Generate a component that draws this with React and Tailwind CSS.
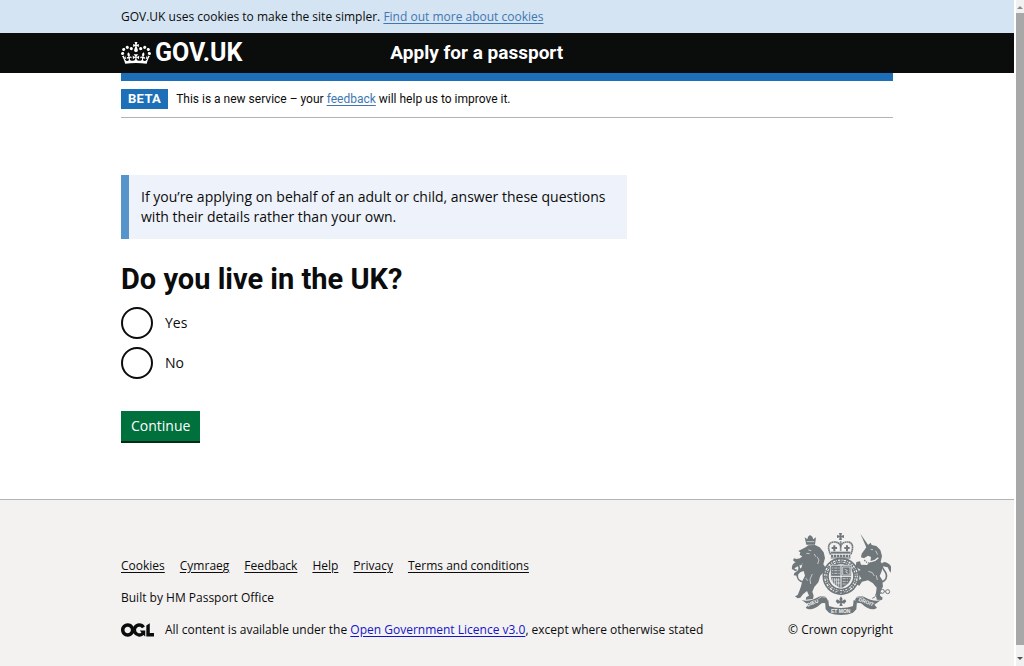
import React, { useState } from 'react'

const FOOTER_LINKS = ['Cookies', 'Cymraeg', 'Feedback', 'Help', 'Privacy', 'Terms and conditions']

const ANSWERS = [
  { value: 'yes', label: 'Yes' },
  { value: 'no', label: 'No' }
]

function Crown() {
  return (
    <svg aria-hidden="true" viewBox="0 0 132 97" className="w-[30px] h-[22px]" fill="currentColor">
      <path d="M25 30.2c3.5 1.5 7.7-.2 9.1-3.7 1.5-3.6-.2-7.8-3.9-9.2-3.6-1.4-7.6.3-9.1 3.9-1.4 3.5.3 7.5 3.9 9zM9 39.5c3.6 1.5 7.8-.2 9.2-3.7 1.5-3.6-.2-7.8-3.9-9.1-3.6-1.5-7.6.2-9.1 3.8-1.4 3.5.3 7.5 3.8 9zM4.4 57.2c3.5 1.5 7.7-.2 9.1-3.8 1.5-3.6-.2-7.7-3.9-9.1-3.5-1.5-7.6.3-9.1 3.8-1.4 3.5.3 7.6 3.9 9.1zm38.3-21.4c3.5 1.5 7.7-.2 9.1-3.8 1.5-3.6-.2-7.7-3.9-9.1-3.6-1.5-7.6.3-9.1 3.8-1.3 3.6.4 7.7 3.9 9.1zm64.4-5.6c-3.6 1.5-7.8-.2-9.1-3.7-1.5-3.6.2-7.8 3.8-9.2 3.6-1.4 7.7.3 9.2 3.9 1.3 3.5-.4 7.5-3.9 9zm15.9 9.3c-3.6 1.5-7.7-.2-9.1-3.7-1.5-3.6.2-7.8 3.7-9.1 3.6-1.5 7.7.2 9.2 3.8 1.5 3.5-.3 7.5-3.8 9zm4.7 17.7c-3.6 1.5-7.8-.2-9.2-3.8-1.5-3.6.2-7.7 3.9-9.1 3.6-1.5 7.7.3 9.2 3.8 1.3 3.5-.4 7.6-3.9 9.1zM89.3 35.8c-3.6 1.5-7.8-.2-9.2-3.8-1.4-3.6.2-7.7 3.9-9.1 3.6-1.5 7.7.3 9.2 3.8 1.4 3.6-.3 7.7-3.9 9.1zM69.7 17.7l8.9 4.7V9.3l-8.9 2.8c-.2-.3-.5-.6-.9-.9L72.4 0H59.6l3.5 11.2c-.3.3-.6.5-.9.9l-8.8-2.8v13.1l8.8-4.7c.3.3.6.7.9.9l-5 15.4v.1c-.2.8-.4 1.6-.4 2.4 0 4.1 3.1 7.5 7 8.1h.2c.3 0 .7.1 1 .1.4 0 .7 0 1-.1h.2c4-.6 7.1-4.1 7.1-8.1 0-.8-.1-1.7-.4-2.4V34l-5.1-15.4c.4-.2.7-.6 1-.9zM66 92.8c16.9 0 32.8 1.1 47.1 3.2 4-16.9 8.9-26.7 14-33.5l-9.6-3.4c1 4.9 1.1 7.2 0 10.2-1.5-1.4-3-4.3-4.2-8.7L108.6 76c2.8-2 5-3.2 7.5-3.3-4.4 9.4-10 11.9-13.6 11.2-4.3-.8-6.3-4.6-5.6-7.9 1-4.7 5.7-5.9 8-.5 4.3-8.7-3-11.4-7.6-8.8 7.1-7.2 7.9-13.5 2.1-21.1-8 6.1-8.1 12.3-4.5 20.8-4.7-5.4-12.1-2.5-9.5 6.2 3.4-5.2 7.9-2 7.2 3.1-.6 4.3-6.4 7.8-13.5 7.2-10.3-.9-10.9-8-11.2-13.8 2.5-.5 7.1 1.8 11 7.3L80.2 60c-4.1 4.4-8 5.3-12.3 5.4 1.4-4.4 8-11.6 8-11.6H55.5s6.4 7.2 7.9 11.6c-4.2-.1-8-1-12.3-5.4l1.4 16.4c3.9-5.5 8.5-7.7 10.9-7.3-.3 5.8-.9 12.8-11.1 13.8-7.2.6-12.9-2.9-13.5-7.2-.7-5 3.8-8.3 7.1-3.1 2.7-8.7-4.6-11.6-9.4-6.2 3.7-8.5 3.6-14.7-4.6-20.8-5.8 7.6-5 13.9 2.2 21.1-4.7-2.6-11.9.1-7.7 8.8 2.3-5.5 7.1-4.2 8.1.5.7 3.3-1.3 7.1-5.7 7.9-3.5.7-9-1.8-13.5-11.2 2.5.1 4.7 1.3 7.5 3.3l-4.7-15.4c-1.2 4.4-2.7 7.2-4.3 8.7-1.1-3-.9-5.3 0-10.2l-9.5 3.4c5 6.9 9.9 16.7 14 33.5 14.8-2.1 30.8-3.2 47.7-3.2z" />
    </svg>
  )
}

function OglLogo() {
  return (
    <svg aria-hidden="true" viewBox="0 0 483.2 195.7" className="w-[33px] h-[14px] shrink-0" fill="currentColor">
      <path d="M421.5 142.8V.1l-50.7 32.3v161.1h112.4v-50.7zm-122.3-9.6A47.12 47.12 0 0 1 221 97.8c0-26 21.1-47.1 47.1-47.1 16.7 0 31.4 8.7 39.7 21.8l42.7-27.2A97.63 97.63 0 0 0 268.1 0c-36.5 0-68.3 20.1-85.1 49.7A98 98 0 0 0 97.8 0C43.9 0 0 43.9 0 97.8s43.9 97.8 97.8 97.8c36.5 0 68.3-20.1 85.1-49.7a97.76 97.76 0 0 0 149.6 25.4l19.4 22.2h3v-87.8h-80l24.3 27.5zM97.8 145c-26 0-47.1-21.1-47.1-47.1s21.1-47.1 47.1-47.1 47.1 21.1 47.1 47.1S123.8 145 97.8 145" />
    </svg>
  )
}

function CoatOfArms() {
  return (
    <svg aria-hidden="true" viewBox="30 20 300 252" className="w-[100px] h-[84px]" fill="#6f777b">
      {/* lion */}
      <path d="M71 36l8 6 2-8 6-5 7 5 3 8 8-6-3 22H76z" />
      <path d="M77 49h23" stroke="#f3f2f1" strokeWidth="2" />
      <path d="M74 66l8-6 20-1 14 7 12 15 4 17-5 19 7 10-6 14-10 10-6 20-12 14-6 14 4 12-2 10-22 2 2-8 8-4-6-14-12 10-8 10-8 2-8-6 8-4 5-12 5-14 4-16 8-16-4-14-10 4-11 10-9-1 2-7 10-7 12-10 2-12-10-4-11 1-7-6 3-6 8 2 10-2 7-6-8-4 2-8-6-4z" />
      <path d="M66 170c-10-2-19-10-17-23 2-10 8-15 5-23-3-9-15-9-16 2-1 7 5 10 9 7" fill="none" stroke="#6f777b" strokeWidth="5" />
      <path d="M33 133c-2-14 6-26 24-24l8-3-3 13-9 2z" />
      <path d="M82 74l9 2M76 84l10 1M94 146l-7 16 2 14M108 94l6 10-4 12M100 86l4 8M74 158l6 8" fill="none" stroke="#f3f2f1" strokeWidth="2" />

      {/* unicorn */}
      <path d="M238 25l26 38-7 5z" />
      <path d="M261 59l8-7 3 7 14 3 12 12 5 18-4 18 7 8-4 20-6 14 8 12 2 20-8 12-2 14 9 7-2 7-16-1-2-20 2-16-12-14-14-8-18 4-8 12-11-5 5-10 12-6-6-10-14 2-12-12 5-8 11 7 14-5-15-10 2-14 11-2 3 10 18 1 10-9 2-15-9-4-12 8-9-3 2-11z" />
      <path d="M252 98l8 9 10 2 12-4 10-8" fill="none" stroke="#f3f2f1" strokeWidth="4" />
      <path d="M250 104l8 8 12 3 14-4 10-8" fill="none" stroke="#6f777b" strokeWidth="4" strokeDasharray="4 3" />
      <path d="M300 170c14-2 20-14 15-26-4-10-14-16-12-25 3-9 15-8 17 2" fill="none" stroke="#6f777b" strokeWidth="5" />
      <path d="M301 122c2-14 27-14 31 8l-4 12-8-16z" />
      <path d="M269 72l7 1M284 76l6 12M262 138l12 4 6 10M286 150l3 14" fill="none" stroke="#f3f2f1" strokeWidth="2" />
      <g fill="none" stroke="#6f777b" strokeWidth="3">
        <circle cx="304" cy="198" r="6" />
        <circle cx="320" cy="199" r="6" />
        <circle cx="290" cy="209" r="6" />
        <path d="M296 206l5-4M310 198h4M283 214l-9 5" />
      </g>

      {/* crown */}
      <path d="M174 23h9l-2 8 8-2v9l-8-2 2 8h-9l2-8-8 2v-9l8 2z" />
      <g fill="none" stroke="#6f777b">
        <path d="M149 88c-10-20-8-36 8-38 12-1 20 5 22 12 2-7 10-13 22-12 16 2 17 18 8 38" strokeWidth="5" strokeDasharray="5 1" />
        <path d="M179 48v30" strokeWidth="5" strokeDasharray="4 2" />
        <path d="M160 60v18M152 68h16M198 60v18M190 68h16" strokeWidth="6" />
        <path d="M150 82h58" strokeWidth="6" />
        <path d="M150 92h58" strokeWidth="7" strokeDasharray="7 2" />
        <path d="M149 98h60" strokeWidth="3" />
      </g>

      {/* garter */}
      <circle cx="180" cy="153" r="46" fill="#f3f2f1" stroke="#6f777b" strokeWidth="19" />
      <circle cx="180" cy="153" r="46" fill="none" stroke="#f3f2f1" strokeWidth="9" strokeDasharray="3 3 7 3 2 3 6 4" />
      <circle cx="180" cy="153" r="46" fill="none" stroke="#6f777b" strokeWidth="3" />
      <path d="M160 193l8 12 12 5 12-5 9-12-20 7z" />
      <path d="M166 200l3-3M178 204l4-1M190 200l3-2" stroke="#f3f2f1" strokeWidth="3" />

      {/* shield */}
      <path d="M149 120h62v34c0 16-13 27-31 36-18-9-31-20-31-36z" stroke="#f3f2f1" strokeWidth="2" />
      <path d="M180 121v67M149 153h62" stroke="#f3f2f1" strokeWidth="3" />
      <g fill="none" stroke="#f3f2f1" strokeWidth="2">
        <path d="M153 128h23M153 136h23M153 144h23" strokeDasharray="4 3 9 3" />
        <path d="M185 125h22v24h-22zM191 132l8 3-5 5 8 4" />
        <path d="M155 158v14M161 158v20M167 158v24M173 158v26M158 164h18M164 173h14" />
        <path d="M185 160h21M185 168h20M185 176h14" strokeDasharray="9 3 4 3" />
      </g>

      {/* scroll and motto */}
      <path d="M62 224c14 6 34 0 50-9 13-7 25-2 28 9l-8 10c-10-3-14 3-20 8-12 10-28 13-38 5l8-9z" />
      <path d="M300 224c-14 6-34 0-50-9-13-7-25-2-28 9l8 10c10-3 14 3 20 8 12 10 28 13 38 5l-8-9z" />
      <path d="M132 228l10-4 2 18c20 8 52 8 72 0l2-18 10 4-2 24-10 10c-22 9-50 9-72 0l-10-10z" />
      <path d="M112 220l10-6 12 2M250 220l-10-6-12 2" fill="none" stroke="#f3f2f1" strokeWidth="2" />
      <path d="M180 213l5 8-3 6 10-5 4 6-6 7-8-2 3 9h-10l3-9-8 2-6-7 4-6 10 5-3-6z" />
      <g fill="#f3f2f1" fontFamily="Liberation Sans" fontWeight="bold" fontSize="15">
        <text x="80" y="244" transform="rotate(-22 80 244)">DIEU</text>
        <text x="150" y="262">ET MON</text>
        <text x="232" y="226" transform="rotate(22 232 226)">DROIT</text>
      </g>
    </svg>
  )
}

function Header() {
  return (
    <header className="bg-[#0b0c0c] font-['Roboto',sans-serif] leading-6 font-bold text-white">
      <div className="mx-auto flex max-w-[772px] items-center py-2">
        <div className="w-1/3">
          <a href="#" className="inline-flex items-center gap-1 align-top text-[25px] leading-6">
            <Crown />
            GOV.UK
          </a>
        </div>
        <a href="#" className="pl-3 text-[19px] leading-6">Apply for a passport</a>
      </div>
    </header>
  )
}

function Question() {
  const [answer, setAnswer] = useState('')

  return (
    <form className="mt-6" onSubmit={(e) => e.preventDefault()}>
      <fieldset>
        <legend className="font-['Roboto',sans-serif] text-[29px] leading-8 font-bold">
          <h1>Do you live in the UK?</h1>
        </legend>
        <div className="mt-3 flex flex-col gap-2">
          {ANSWERS.map((a) => (
            <div key={a.value} className="flex items-center gap-3">
              <input
                id={a.value}
                type="radio"
                name="live-in-uk"
                value={a.value}
                checked={answer === a.value}
                onChange={() => setAnswer(a.value)}
                className="size-8 appearance-none rounded-full border-2 border-[#0b0c0c] bg-white checked:bg-[#0b0c0c] checked:shadow-[inset_0_0_0_6px_white]"
              />
              <label htmlFor={a.value}>{a.label}</label>
            </div>
          ))}
        </div>
      </fieldset>
      <button type="submit" className="mt-8 h-8 border-b-2 border-[#002d18] bg-[#00703c] px-[10px] text-white">Continue</button>
    </form>
  )
}

function Footer() {
  return (
    <footer className="grow border-t border-[#b1b4b6] bg-[#f3f2f1] pt-8 pb-7 text-xs leading-4">
      <div className="mx-auto flex max-w-[772px] items-end justify-between">
        <div className="flex flex-col gap-4">
          <ul className="flex gap-[15px]">
            {FOOTER_LINKS.map((link) => (
              <li key={link}><a href="#" className="underline underline-offset-2">{link}</a></li>
            ))}
          </ul>
          <p>Built by HM Passport Office</p>
          <div className="flex items-center gap-[11px]">
            <OglLogo />
            <p>
              All content is available under the <a href="#" className="text-[#1414c8] underline underline-offset-2">Open Government Licence v3.0</a>, except where otherwise stated
            </p>
          </div>
        </div>
        <div className="flex flex-col items-center gap-[6px]">
          <CoatOfArms />
          <a href="#">© Crown copyright</a>
        </div>
      </div>
    </footer>
  )
}

function Scrollbar() {
  return (
    <div aria-hidden="true" className="flex w-[10px] shrink-0 flex-col items-center gap-1 border-l-2 border-white bg-[#f1f1f1] py-[6px]">
      <div className="border-x-3 border-b-3 border-x-transparent border-b-[#8a8a8a]" />
      <div className="w-full grow bg-[#a8a8a8]" />
      <div className="mt-2 border-x-3 border-t-3 border-x-transparent border-t-[#505050]" />
    </div>
  )
}

export default function App() {
  return (
    <div className="flex min-h-screen bg-white font-['Open_Sans',sans-serif] text-sm leading-5 text-[#0b0c0c]">
      <div className="flex min-w-0 grow flex-col">
        <div className="bg-[#d5e4f3] py-2 text-xs leading-[17px]">
          <p className="mx-auto max-w-[772px]">
            GOV.UK uses cookies to make the site simpler. <a href="#" className="text-[#4177b1] underline underline-offset-2">Find out more about cookies</a>
          </p>
        </div>
        <Header />

        <div className="mx-auto w-full max-w-[772px]">
          <div className="h-2 bg-[#1d70b8]" />
          <div className="flex items-center gap-2 border-b border-[#b1b4b6] py-2 font-['Roboto',sans-serif] text-xs leading-5">
            <strong className="bg-[#1d70b8] px-[7px] text-[13px] leading-5 tracking-wide text-white">BETA</strong>
            <p>
              This is a new service – your <a href="#" className="text-[#4177b1] underline underline-offset-2">feedback</a> will help us to improve it.
            </p>
          </div>
        </div>

        <main className="mx-auto w-full max-w-[772px] pt-[57px] pb-14">
          <div className="max-w-[506px] border-l-8 border-[#5694ca] bg-[#eef2fa] p-3">
            If you’re applying on behalf of an adult or child, answer these questions with their details rather than your own.
          </div>
          <Question />
        </main>
        <Footer />
      </div>
      <Scrollbar />
    </div>
  )
}
